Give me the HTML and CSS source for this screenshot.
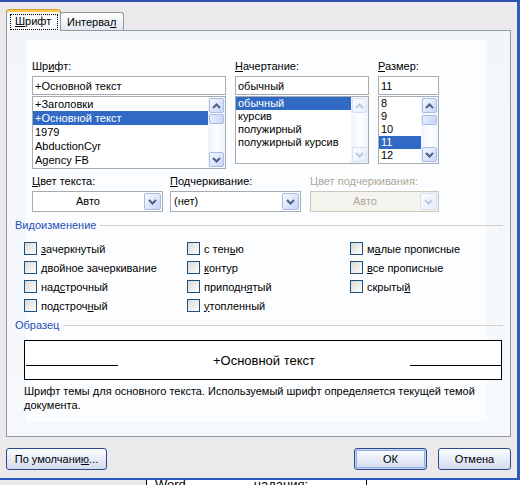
FILE: index.html
```html
<!DOCTYPE html>
<html lang="ru">
<head>
    <meta charset="UTF-8">
    <meta name="viewport" content="width=device-width, initial-scale=1.0">
    <title>Шрифт</title>
    <link rel="stylesheet" href="styles.css">
</head>
<body>
<div class="window">
    <div class="dialog">
        <div class="tabs">
            <div class="tab active"><span class="focus"><u>Ш</u>рифт</span></div>
            <div class="tab">Интерва<u>л</u></div>
        </div>

        <div class="panel">
            <div class="fonts">
                <div class="col col-font">
                    <div class="fld-label">Шр<u>и</u>фт:</div>
                    <div class="edit">+Основной текст</div>
                    <div class="list list-font">
                        <ul class="items">
                            <li>+Заголовки</li>
                            <li class="sel">+Основной текст</li>
                            <li>1979</li>
                            <li>AbductionCyr</li>
                            <li>Agency FB</li>
                        </ul>
                        <div class="scroll">
                            <div class="sbtn"><svg class="arr" width="9" height="6" viewBox="0 0 9 6"><path d="M1 5 4.5 1.5 8 5"/></svg></div>
                            <div class="thumb"></div>
                            <div class="sbtn down"><svg class="arr" width="9" height="6" viewBox="0 0 9 6"><path d="M1 1 4.5 4.5 8 1"/></svg></div>
                        </div>
                    </div>
                </div>
                <div class="col col-style">
                    <div class="fld-label"><u>Н</u>ачертание:</div>
                    <div class="edit">обычный</div>
                    <div class="list list-short">
                        <ul class="items">
                            <li class="sel">обычный</li>
                            <li>курсив</li>
                            <li>полужирный</li>
                            <li>полужирный курсив</li>
                        </ul>
                        <div class="scroll off">
                            <div class="sbtn"><svg class="arr" width="9" height="6" viewBox="0 0 9 6"><path d="M1 5 4.5 1.5 8 5"/></svg></div>
                            <div class="sbtn down"><svg class="arr" width="9" height="6" viewBox="0 0 9 6"><path d="M1 1 4.5 4.5 8 1"/></svg></div>
                        </div>
                    </div>
                </div>
                <div class="col col-size">
                    <div class="fld-label"><u>Р</u>азмер:</div>
                    <div class="edit">11</div>
                    <div class="list list-short">
                        <ul class="items">
                            <li>8</li>
                            <li>9</li>
                            <li>10</li>
                            <li class="sel">11</li>
                            <li>12</li>
                        </ul>
                        <div class="scroll">
                            <div class="sbtn"><svg class="arr" width="9" height="6" viewBox="0 0 9 6"><path d="M1 5 4.5 1.5 8 5"/></svg></div>
                            <div class="thumb thumb-size"></div>
                            <div class="sbtn down"><svg class="arr" width="9" height="6" viewBox="0 0 9 6"><path d="M1 1 4.5 4.5 8 1"/></svg></div>
                        </div>
                    </div>
                </div>
            </div>

            <div class="colors">
                <div class="c1">
                    <div class="fld-label"><u>Ц</u>вет текста:</div>
                    <div class="combo">
                        <div class="val center">Авто</div>
                        <div class="cbtn"><svg class="arr" width="9" height="6" viewBox="0 0 9 6"><path d="M1 1 4.5 4.5 8 1"/></svg></div>
                    </div>
                </div>
                <div class="c2">
                    <div class="fld-label"><u>П</u>одчеркивание:</div>
                    <div class="combo">
                        <div class="val">(нет)</div>
                        <div class="cbtn"><svg class="arr" width="9" height="6" viewBox="0 0 9 6"><path d="M1 1 4.5 4.5 8 1"/></svg></div>
                    </div>
                </div>
                <div class="c3">
                    <div class="fld-label grey">Цвет подчеркивания:</div>
                    <div class="combo off">
                        <div class="val center">Авто</div>
                        <div class="cbtn"><svg class="arr" width="9" height="6" viewBox="0 0 9 6"><path d="M1 1 4.5 4.5 8 1"/></svg></div>
                    </div>
                </div>
            </div>

            <div class="group-title first">Видоизменение</div>
            <div class="effects">
                <div class="check"><span class="box"></span><span><u>з</u>ачеркнутый</span></div>
                <div class="check"><span class="box"></span><span><u>д</u>войное зачеркивание</span></div>
                <div class="check"><span class="box"></span><span>над<u>с</u>трочный</span></div>
                <div class="check"><span class="box"></span><span>подстроч<u>н</u>ый</span></div>
                <div class="check"><span class="box"></span><span>с тен<u>ь</u>ю</span></div>
                <div class="check"><span class="box"></span><span><u>к</u>онтур</span></div>
                <div class="check"><span class="box"></span><span>приподн<u>я</u>тый</span></div>
                <div class="check"><span class="box"></span><span><u>у</u>топленный</span></div>
                <div class="check"><span class="box"></span><span>м<u>а</u>лые прописные</span></div>
                <div class="check"><span class="box"></span><span><u>в</u>се прописные</span></div>
                <div class="check"><span class="box"></span><span>скрыты<u>й</u></span></div>
            </div>

            <div class="group-title">Образец</div>
            <div class="preview">
                <span class="pv-line left"></span>
                <span class="pv-text">+Основной текст</span>
                <span class="pv-line right"></span>
            </div>
            <p class="note">Шрифт темы для основного текста. Используемый шрифт определяется текущей темой<br>документа.</p>
        </div>

        <div class="buttons">
            <button class="btn btn-defaults">По умолчани<u>ю</u>...</button>
            <button class="btn btn-ok">ОК</button>
            <button class="btn btn-cancel">Отмена</button>
        </div>
    </div>

    <div class="doc">
        <div class="doc-gap"></div>
        <div class="doc-cell"><span>Word ·</span><span class="doc-word">надания:</span></div>
        <div class="doc-cell last"></div>
    </div>
</div>
</body>
</html>
```

FILE: styles.css
```css
body {
    margin: 0;
    font-family: "Liberation Sans", Arial, sans-serif;
    font-size: 11px;
    color: #000;
    background: #fff;
}

u {
    text-decoration: underline;
    text-underline-offset: 1px;
}

.window {
    width: 520px;
    height: 485px;
    overflow: hidden;
}

.dialog {
    height: 480px;
    box-sizing: border-box;
    background: #ECE9ED;
    border-top: 2px solid #2B52B0;
    border-right: 3px solid #2F5BBE;
    border-bottom: 2px solid #2F5BBE;
}

/* tabs */

.tabs {
    display: flex;
    align-items: flex-end;
    height: 28px;
    padding-left: 6px;
}

.tab {
    height: 18px;
    box-sizing: border-box;
    padding: 3px 7px 0 6px;
    border: 1px solid #919B9C;
    border-bottom: none;
    border-radius: 3px 3px 0 0;
    background: linear-gradient(#FFFFFF, #E2E8F3);
    line-height: 13px;
    white-space: nowrap;
}

.tab.active {
    position: relative;
    z-index: 1;
    width: 55px;
    height: 22px;
    margin-bottom: -1px;
    margin-right: -1px;
    padding: 0;
    border-top: 1px solid #E0A03C;
    box-shadow: inset 0 2px 0 #FFCB47;
    background: #FAFBFD;
}

.focus {
    display: block;
    width: 48px;
    height: 16px;
    box-sizing: border-box;
    margin: 4px 0 0 3px;
    padding-left: 4px;
    border: 1px dotted #000;
    line-height: 13px;
}

/* panel */

.panel {
    height: 407px;
    box-sizing: border-box;
    margin: 0 6px;
    border: 1px solid #919B9C;
    padding: 29px 7px 0 8px;
    background: linear-gradient(#FCFDFE, #FCFDFE) 19px 9px / 461px 382px no-repeat,
                linear-gradient(#F2F6FA, #F6F9FC);
}

.fonts {
    display: flex;
    align-items: flex-start;
    gap: 9px;
    margin-left: 17px;
}

.col-font { width: 194px; }
.col-style { width: 134px; }
.col-size { width: 61px; }

.fld-label {
    line-height: 13px;
    margin-bottom: 3px;
    white-space: nowrap;
}

.fld-label.grey {
    color: #ACA899;
}

.edit {
    height: 19px;
    box-sizing: border-box;
    border: 1px solid #A5ACB2;
    background: #fff;
    padding: 3px 0 0 2px;
    line-height: 13px;
    margin-bottom: 1px;
}

.list {
    display: flex;
    box-sizing: border-box;
    border: 1px solid #A5ACB2;
    background: #fff;
}

.list-font { height: 73px; }
.list-short { height: 68px; }

.items {
    flex: 1;
    list-style: none;
    margin: 0;
    padding: 0;
    overflow: hidden;
}

.items li {
    height: 13px;
    line-height: 13px;
    padding-left: 2px;
    white-space: nowrap;
}

.list-font .items li {
    height: 14px;
    line-height: 14px;
}

.items li.sel {
    background: #316AC5;
    color: #fff;
}

/* scrollbars */

.scroll {
    width: 17px;
    box-sizing: border-box;
    padding: 1px;
    display: flex;
    flex-direction: column;
    background: linear-gradient(to right, #EEF2FB, #FDFEFF 55%, #EFF3FC);
}

.sbtn {
    height: 15px;
    box-sizing: border-box;
    border: 1px solid #A9BCE6;
    border-radius: 2px;
    background: linear-gradient(135deg, #F6F9FF, #C5D5F8);
    display: flex;
    align-items: center;
    justify-content: center;
}

.sbtn.down {
    margin-top: auto;
}

.thumb {
    height: 10px;
    margin-top: 1px;
    box-sizing: border-box;
    border: 1px solid #A9BCE6;
    border-radius: 2px;
    background: linear-gradient(to right, #E4ECFD, #C8D7F9);
}

.thumb-size {
    margin-top: 2px;
}

.arr path {
    fill: none;
    stroke: #4D6185;
    stroke-width: 2;
}

.scroll.off .sbtn {
    border-color: #D6E0F4;
    background: linear-gradient(135deg, #FAFCFF, #E6EDFB);
}

.scroll.off .arr path {
    stroke: #BCC8E3;
}

/* colour combos */

.colors {
    display: flex;
    margin: 6px 0 0 17px;
}

.c1 { width: 131px; margin-right: 7px; }
.c2 { width: 131px; margin-right: 9px; }
.c3 { width: 129px; }

.combo {
    display: flex;
    height: 21px;
    box-sizing: border-box;
    border: 1px solid #A5ACB2;
    background: #fff;
}

.combo .val {
    flex: 1;
    line-height: 19px;
    padding-left: 3px;
}

.combo .val.center {
    text-align: center;
    padding-left: 0;
}

.cbtn {
    width: 17px;
    margin: 1px;
    box-sizing: border-box;
    border: 1px solid #A9BCE6;
    border-radius: 2px;
    background: linear-gradient(135deg, #F6F9FF, #C5D5F8);
    display: flex;
    align-items: center;
    justify-content: center;
}

.combo.off {
    border-color: #CAC8BB;
    background: #F4F3EE;
    color: #ACA899;
}

.combo.off .cbtn {
    border-color: #D6E0F4;
    background: linear-gradient(135deg, #FAFCFF, #E6EDFB);
}

.combo.off .arr path {
    stroke: #BCC8E3;
}

/* groups */

.group-title {
    display: flex;
    align-items: center;
    margin-top: 4px;
    line-height: 13px;
    color: #1F4EBB;
}

.group-title.first {
    margin-top: 7px;
}

.group-title::after {
    content: "";
    flex: 1;
    height: 1px;
    margin-left: 4px;
    background: #D3D3CB;
}

.effects {
    display: grid;
    grid-template-columns: 163px 163px 163px;
    grid-template-rows: repeat(4, 19px);
    grid-auto-flow: column;
    margin: 7px 0 0 9px;
}

.check {
    display: flex;
    align-items: center;
    white-space: nowrap;
}

.box {
    width: 13px;
    height: 13px;
    box-sizing: border-box;
    margin-right: 4px;
    border: 1px solid #1C5180;
    background: linear-gradient(135deg, #D8D8D3, #FFFFFF);
}

.preview {
    display: flex;
    align-items: flex-start;
    width: 478px;
    height: 40px;
    box-sizing: border-box;
    margin: 8px 0 0 9px;
    border: 1px solid #000;
    background: #fff;
}

.pv-line {
    height: 1px;
    margin-top: 24px;
    background: #000;
}

.pv-line.left {
    width: 92px;
    margin-left: 1px;
}

.pv-line.right {
    width: 91px;
}

.pv-text {
    flex: 1;
    margin-top: 12px;
    text-align: center;
    font-size: 13px;
    line-height: 15px;
}

.note {
    margin: 4px 0 0 9px;
    line-height: 14px;
    white-space: nowrap;
}

/* buttons */

.buttons {
    display: flex;
    width: 505px;
    margin: 11px 0 0 6px;
}

.btn {
    height: 22px;
    box-sizing: border-box;
    padding: 0;
    border: 1px solid #2C4A86;
    border-radius: 3px;
    background: linear-gradient(#FBFCFE, #D3DCF0);
    font: inherit;
    color: #000;
}

.btn-defaults {
    width: 101px;
}

.btn-ok {
    width: 73px;
    margin-left: auto;
    box-shadow: inset 0 0 0 1px #C4D5F4, inset 0 0 0 2px #8FAEE8;
}

.btn-cancel {
    width: 73px;
    margin-left: 11px;
}

/* document behind the dialog */

.doc {
    display: flex;
    height: 5px;
    overflow: hidden;
    background: #fff;
    font-size: 13px;
    line-height: 9px;
}

.doc-gap {
    width: 146px;
    background: #ECE9ED;
}

.doc-cell {
    width: 211px;
    padding-left: 8px;
    border-left: 1px solid #000;
    white-space: nowrap;
}

.doc-word {
    margin-left: 60px;
}

.doc-cell.last {
    flex: 1;
}
```
